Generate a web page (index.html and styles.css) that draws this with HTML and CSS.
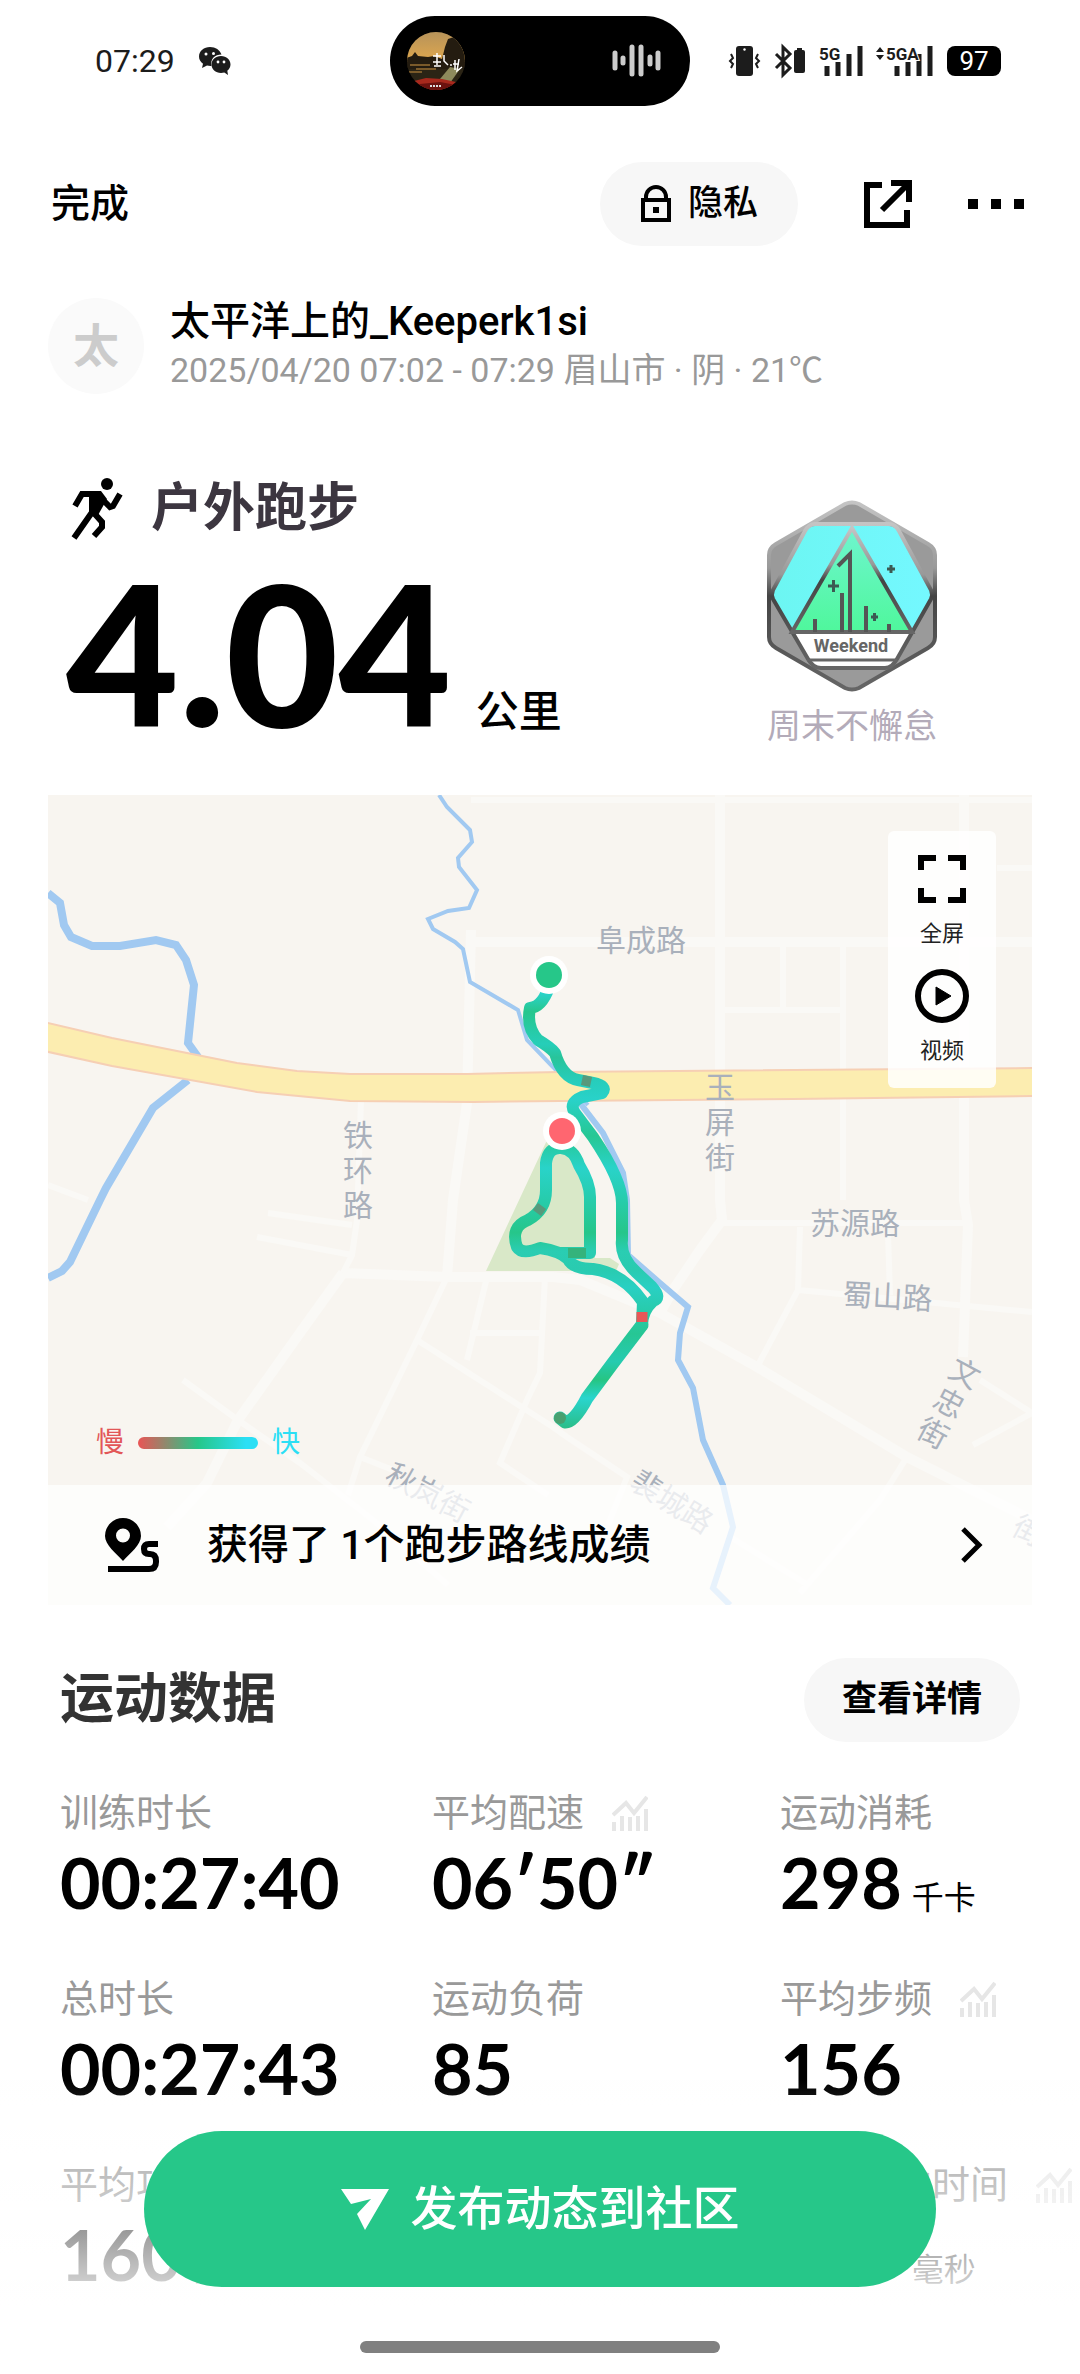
FILE: index.html
```html
<!DOCTYPE html>
<html lang="zh-CN">
<head>
    <meta charset="UTF-8">
    <meta name="viewport" content="width=device-width, initial-scale=1.0">
    <title>户外跑步</title>
    <link rel="stylesheet" href="styles.css">
</head>
<body>
    <!-- Status bar -->
    <div class="status-bar">
        <div class="status-left">
            <span class="clock">07:29</span>
            <svg width="32" height="28" viewBox="0 0 32 28">
                <path d="M11 0C5 0 0 4 0 9.500c0 3 1.500 5.500 4 7.200L3 21l5-2.500c1.500.4 3 .5 4.500.4C11 12 16 7.500 22.500 7.500 21 3 16.500 0 11 0z" fill="#1c1c1c"/>
                <path d="M22 9c-5.500 0-9.500 3.700-9.500 8.500S16.500 26 22 26c1.200 0 2.300-.2 3.300-.5L29 28l-.7-4.200c2-1.600 3.200-3.800 3.200-6.300C31.500 12.700 27.500 9 22 9z" fill="#1c1c1c"/>
                <circle cx="7" cy="7" r="1.500" fill="#fff"/><circle cx="14.500" cy="6.500" r="1.500" fill="#fff"/>
                <circle cx="19" cy="15" r="1.400" fill="#fff"/><circle cx="25" cy="15" r="1.400" fill="#fff"/>
            </svg>
        </div>
        <div class="island">
            <svg width="60" height="60" viewBox="0 0 60 60">
                <defs>
                    <clipPath id="cover"><circle cx="30" cy="30" r="29"/></clipPath>
                    <linearGradient id="sky" x1="0" y1="0" x2="0" y2="1">
                        <stop offset="0" stop-color="#b5925a"/><stop offset="1" stop-color="#e0a84e"/>
                    </linearGradient>
                </defs>
                <g clip-path="url(#cover)">
                    <rect width="60" height="60" fill="#2b2415"/>
                    <rect width="60" height="31" fill="url(#sky)"/>
                    <path d="M0 27l6-2 3-4 3 4 10 1 6-1 8 3 3-12 3-8 6-2 8 4 7 3v25H0z" fill="#241c10"/>
                    <path d="M4 34h20M10 38h20M2 41h14" stroke="#7a5a2a" stroke-width="2"/>
                    <path d="M34 48l10-12 10 2-10 14z" fill="#8d8a5c"/>
                    <path d="M0 52l20-5 16 1 14 3 10 3v6H0z" fill="#a8291d"/>
                    <path d="M4 54l30-3 26 5v4H0z" fill="#6b120f"/>
                    <path d="M27 25h8M31 22v12M27 31h8M28 35h7M38 24v6l4 4M44 34h2M49 29v10M47 33h6M53 28l-2 12 5-4" stroke="#fff" stroke-width="1.500" fill="none"/>
                    <path d="M24 55h12" stroke="#ddd" stroke-width="2" stroke-dasharray="2 1"/>
                </g>
            </svg>
            <svg width="50" height="34" viewBox="0 0 50 34" stroke="#ccc" stroke-width="5" stroke-linecap="round">
                <path d="M3 9v15M11 14v5M20 3v27M29 3v27M38 13v7M46 9v15"/>
            </svg>
        </div>
        <div class="status-right">
            <svg width="32" height="32" viewBox="0 0 32 32">
                <rect x="7" y="1" width="17" height="30" rx="3" fill="#1c1c1c"/><circle cx="15.500" cy="4.500" r="1.200" fill="#fff"/>
                <path d="M2 9l2 4-3 3 3 3-2 4M29 9l-2 4 3 3-3 3 2 4" stroke="#1c1c1c" stroke-width="2" fill="none"/>
            </svg>
            <svg width="32" height="32" viewBox="0 0 32 32">
                <path d="M2 9l14 14-7 7V2l7 7L2 23" stroke="#1c1c1c" stroke-width="3" fill="none"/>
                <rect x="20" y="5" width="11" height="23" rx="2" fill="#1c1c1c"/><rect x="23" y="3" width="5" height="4" fill="#1c1c1c"/>
            </svg>
            <svg width="44" height="32" viewBox="0 0 44 32">
                <path d="M8 21v10M19 17v14M30 9v22M41 1v30" stroke="#1c1c1c" stroke-width="5"/>
                <text x="0" y="15" class="signal">5G</text>
            </svg>
            <svg width="58" height="32" viewBox="0 0 58 32">
                <path d="M21 21v10M32 17v14M43 9v22M54 1v30" stroke="#1c1c1c" stroke-width="5"/>
                <path d="M0 7l4-5 4 5zM0 10l4 5 4-5z" fill="#1c1c1c"/>
                <text x="10" y="15" class="signal">5GA</text>
            </svg>
            <span class="battery">97</span>
        </div>
    </div>

    <div class="container">
        <div class="nav">
            <a href="#" class="done">完成</a>
            <button class="pill">
                <svg width="32" height="38" viewBox="0 0 32 38" fill="none" stroke="#000" stroke-width="4">
                    <rect x="3" y="15" width="26" height="20"/><path d="M6 15v-3a10 10 0 0 1 20 0v3"/><path d="M13 25h6" stroke-width="6"/>
                </svg>
                隐私
            </button>
            <button class="icon-button share" aria-label="分享">
                <svg width="50" height="50" viewBox="0 0 50 50" fill="none" stroke="#000" stroke-width="6">
                    <path d="M18 6H3v40h40V31"/><path d="M27 4h18v19"/><path d="M45 4L18 31"/>
                </svg>
            </button>
            <button class="icon-button" aria-label="更多">
                <svg width="56" height="10" viewBox="0 0 56 10"><path d="M0 0h10v10H0zM23 0h10v10H23zM46 0h10v10H46z"/></svg>
            </button>
        </div>

        <div class="user">
            <div class="avatar">太</div>
            <div>
                <div class="username">太平洋上的_Keeperk1si</div>
                <div class="meta">2025/04/20 07:02 - 07:29 眉山市 · 阴 · 21℃</div>
            </div>
        </div>

        <div class="summary">
            <div>
                <div class="sport">
                    <svg width="54" height="62" viewBox="0 0 54 62">
                        <circle cx="36" cy="6" r="6"/>
                        <path d="M4 28l7-12h17M24 30L3 60" fill="none" stroke="#000" stroke-width="6"/>
                        <path d="M18 13h12l6 8-10 18-8-2z"/>
                        <path d="M27 17l12 12 3-1 7-12M22 34l9 10v5l-8 9" fill="none" stroke="#000" stroke-width="6"/>
                    </svg>
                    <h1>户外跑步</h1>
                </div>
                <div class="distance">4.04<span>公里</span></div>
            </div>
            <div class="badge">
                <svg width="170" height="192" viewBox="0 0 170 192">
                    <defs>
                        <linearGradient id="metal" x1="0" y1="0" x2="0" y2="1">
                            <stop offset="0" stop-color="#c4c4c4"/><stop offset=".35" stop-color="#999"/><stop offset=".5" stop-color="#444"/><stop offset="1" stop-color="#666"/>
                        </linearGradient>
                        <linearGradient id="peak" x1="0" y1="0" x2="0" y2="1">
                            <stop offset="0" stop-color="#6ff5cf"/><stop offset="1" stop-color="#4ff79c"/>
                        </linearGradient>
                        <linearGradient id="glass" x1="0" y1="0" x2="1" y2="0">
                            <stop offset="0" stop-color="#6cf6f2"/><stop offset="1" stop-color="#74f8ff"/>
                        </linearGradient>
                    </defs>
                    <path d="M78 4q7-3 14 0l69 40q7 4 7 11v82q0 7-7 11l-69 40q-7 3-14 0L9 148q-7-4-7-11V55q0-7 7-11z" fill="#9a9a9a" stroke="url(#metal)" stroke-width="4"/>
                    <path d="M48 26h74q6 0 10 7l32 59q2 5 0 9l-34 58q-5 9-12 9H54q-8 0-13-9L6 101q-2-4 0-9l32-59q4-7 10-7z" fill="url(#glass)"/>
                    <path d="M25 132h120l-17 32q-4 5-10 5H54q-8 0-13-8z" fill="#fff"/>
                    <path d="M85 28l60 104H25z" fill="url(#peak)"/>
                    <path d="M48 24h74q6 0 10 7l32 59q2 5 0 9l-34 60q-5 9-12 9H54q-8 0-13-9L6 99q-2-4 0-9l32-59q4-7 10-7z" fill="none" stroke="url(#metal)" stroke-width="4"/>
                    <path d="M25 132L85 28l60 104z" fill="none" stroke="url(#metal)" stroke-width="4"/>
                    <path d="M40 160h90" stroke="#666" stroke-width="3"/>
                    <path d="M71 66l12-12v78M75 93v39M99 106v26M48 119v13M122 124v8" stroke="#555" stroke-width="4" fill="none"/>
                    <path d="M61 86h11M66.500 80v12M120 69h8M124 65v8M104 117h7M107.500 113v8" stroke="#3c5a52" stroke-width="3"/>
                    <text x="84" y="152" text-anchor="middle" class="badge-text">Weekend</text>
                </svg>
                <div class="badge-name">周末不懈怠</div>
            </div>
        </div>

        <div class="map">
            <svg class="map-canvas" viewBox="0 0 984 810">
                <defs>
                    <linearGradient id="pace" gradientUnits="userSpaceOnUse" x1="0" y1="180" x2="0" y2="640">
                        <stop offset="0" stop-color="#2ad9e0"/>
                        <stop offset=".03" stop-color="#2ad6d8"/>
                        <stop offset=".08" stop-color="#27c68d"/>
                        <stop offset=".15" stop-color="#26ceb9"/>
                        <stop offset=".18" stop-color="#28c49a"/>
                        <stop offset=".23" stop-color="#27cdbb"/>
                        <stop offset=".27" stop-color="#29d2c9"/>
                        <stop offset=".35" stop-color="#26c793"/>
                        <stop offset=".42" stop-color="#29d3c9"/>
                        <stop offset=".48" stop-color="#27cdb0"/>
                        <stop offset=".56" stop-color="#26c68a"/>
                        <stop offset=".6" stop-color="#2acdb2"/>
                        <stop offset=".64" stop-color="#29cbb0"/>
                        <stop offset=".68" stop-color="#29d0c3"/>
                        <stop offset=".78" stop-color="#27c694"/>
                        <stop offset=".84" stop-color="#26cbb0"/>
                        <stop offset=".88" stop-color="#26c583"/>
                        <stop offset=".92" stop-color="#29d5ce"/>
                        <stop offset="1" stop-color="#2bb878"/>
                    </linearGradient>
                </defs>
                <!-- minor roads -->
                <g fill="none" stroke="#faf9f6">
                    <path stroke-width="10" d="M672 0V405L674 425L652 455L625 495L612 518M916 0V405L920 430L915 562M295 478L399 482H505L532 485L612 518L709 572L859 662L984 725M423 135L419 308L405 405L399 482M423 147H984M295 478L259 528L190 625L159 688L119 732"/>
                    <path stroke-width="6" d="M423 5H984M735 148V215M795 148V405M675 215H795M949 73H984M313 305L309 425L304 460L295 478M399 482L369 545L312 662L300 700M135 585L190 625L252 668L325 725L400 790M369 545L505 632L519 642L579 682L560 730M422 538H495M439 482L419 565M497 482L492 578L479 605L452 668L500 700M675 428H920M752 432L750 495L709 572M750 495L984 517M840 438L842 500M859 662L832 705L752 798M932 585L984 618L925 650M209 442L304 460M220 418L304 430M312 662L345 675M0 390L40 405M679 740L760 790"/>
                </g>
                <!-- park -->
                <path d="M500 343L438 476H568L571 469L562 463H547L545 395L525 350z" fill="#d9e8c8"/>
                <!-- rivers -->
                <g fill="none" stroke="#a1c9f1">
                    <path stroke-width="8" d="M0 98L12 108L16 130L23 142L44 151L72 151L108 145L128 150L138 165L146 190L140 248L150 262M140 285L105 313L58 393L52 405L22 467L14 476L0 483"/>
                    <path stroke-width="4" d="M391 0L399 12L422 35L424 47L410 63L411 72L429 95L421 113L400 116L380 124L385 134L407 147L415 154L422 187L470 215L479 245L505 272L540 310"/>
                    <path stroke-width="6" d="M532 308L555 338L575 378L579 405L580 460L612 488L640 512L632 538L630 565L645 593L655 645L675 690L685 732L665 793L682 810"/>
                </g>
                <!-- main road -->
                <path d="M-4 227L64 243L189 268L249 276L302 279H419L512 277L988 273V301L745 304L512 306L425 307L302 306L209 297L64 271L-4 256z" fill="#fcedb0" stroke="#f6cfb4" stroke-width="2"/>
                <g class="road-name">
                    <text x="548" y="156">阜成路</text>
                    <text x="762" y="439">苏源路</text>
                    <text x="794" y="510" transform="rotate(3 794 510)">蜀山路</text>
                    <text text-anchor="middle"><tspan x="310" y="351">铁</tspan><tspan x="310" y="386">环</tspan><tspan x="310" y="421">路</tspan></text>
                    <text text-anchor="middle"><tspan x="672" y="303">玉</tspan><tspan x="672" y="338">屏</tspan><tspan x="672" y="373">街</tspan></text>
                    <text transform="translate(917 578) rotate(28)" text-anchor="middle"><tspan x="0" y="11">文</tspan><tspan x="0" y="45">忠</tspan><tspan x="0" y="79">街</tspan></text>
                    <text transform="translate(335 686) rotate(28)">秋岚街</text>
                    <text transform="translate(580 692) rotate(32)">裴城路</text>
                    <text transform="translate(962 738) rotate(28)">街</text>
                </g>
                <!-- track -->
                <g fill="none" stroke="url(#pace)" stroke-width="12" stroke-linecap="round" stroke-linejoin="round">
                    <path d="M501 192Q494 212 482 213Q478 232 490 245Q502 252 507 258Q514 282 530 285L545 288Q560 291 554 298L534 302Q520 308 527 318L545 342Q574 385 574 408V445Q572 462 588 477L604 492Q614 503 605 506Q594 516 594 530"/>
                    <path d="M594 530L595 507Q575 478 545 474Q525 474 520 464Q512 456 492 453Q474 460 469 452Q462 432 480 425Q498 415 498 395V368Q500 352 513 353Q526 354 531 370Q542 388 542 402V458L512 458"/>
                    <path stroke-width="13" d="M594 530L565 568L539 603Q526 628 517 627L512 623"/>
                </g>
                <path d="M594 517V527" stroke="#e75757" stroke-width="11"/>
                <path d="M494 411L489 418M534 285L543 287" stroke="#58997b" stroke-width="10"/>
                <path d="M520 458H538" stroke="#35b37c" stroke-width="10"/>
                <circle cx="512" cy="623" r="6" fill="#48a070"/>
                <circle cx="501" cy="180" r="19" fill="#fff"/><circle cx="501" cy="180" r="13" fill="#26c789"/>
                <circle cx="514" cy="336" r="19" fill="#fff"/><circle cx="514" cy="336" r="13" fill="#ff6670"/>
            </svg>
            <div class="map-tools">
                <button>
                    <svg width="54" height="54" viewBox="0 0 54 54" fill="none" stroke="#000" stroke-width="6">
                        <path d="M21 6H6v12M33 6h15v12M21 48H6V36M33 48h15V36"/>
                    </svg>
                    全屏
                </button>
                <button>
                    <svg width="54" height="54" viewBox="0 0 54 54">
                        <circle cx="27" cy="27" r="24" fill="none" stroke="#000" stroke-width="6"/><path d="M21 18l15 9-15 9z" stroke="#000" stroke-linejoin="round"/>
                    </svg>
                    视频
                </button>
            </div>
            <div class="legend">
                <span class="slow">慢</span>
                <span class="legend-bar"></span>
                <span class="fast">快</span>
            </div>
            <a href="#" class="route-link">
                <svg width="56" height="56" viewBox="0 0 56 56">
                    <path fill-rule="evenodd" d="M19 1A18 18 0 0 0 1 19C1 28 12 36 19 44C26 36 37 28 37 19A18 18 0 0 0 19 1zM19 11.500a7 7 0 1 1 0 14 7 7 0 0 1 0-14z"/>
                    <path d="M54 27H45q-5 0-5 5t5 5h1q6 0 6 7v1q0 7-7 7H4" fill="none" stroke="#000" stroke-width="6"/>
                </svg>
                <span>获得了 1个跑步路线成绩</span>
                <svg width="24" height="36" viewBox="0 0 24 36"><path d="M3 2l16 16L3 34" fill="none" stroke="#000" stroke-width="5"/></svg>
            </a>
        </div>

        <div class="section-head">
            <h2>运动数据</h2>
            <button class="pill detail">查看详情</button>
        </div>

        <svg class="symbols">
            <symbol id="chart" viewBox="0 0 36 36">
                <path d="M1 20L14 8l8 10L35 2" fill="none" stroke="#e6e6e6" stroke-width="4"/>
                <path d="M2 27v9M10 21v15M18 22v14M26 21v15M34 14v22" stroke="#e6e6e6" stroke-width="4"/>
            </symbol>
        </svg>
        <div class="stats">
            <div class="stat">
                <div class="stat-label">训练时长</div>
                <div class="stat-value">00:27:40</div>
            </div>
            <div class="stat">
                <div class="stat-label">平均配速 <svg class="chart"><use href="#chart"/></svg></div>
                <div class="stat-value">06′50″</div>
            </div>
            <div class="stat">
                <div class="stat-label">运动消耗</div>
                <div class="stat-value">298<span>千卡</span></div>
            </div>
            <div class="stat">
                <div class="stat-label">总时长</div>
                <div class="stat-value">00:27:43</div>
            </div>
            <div class="stat">
                <div class="stat-label">运动负荷</div>
                <div class="stat-value">85</div>
            </div>
            <div class="stat">
                <div class="stat-label">平均步频 <svg class="chart"><use href="#chart"/></svg></div>
                <div class="stat-value">156</div>
            </div>
            <div class="stat">
                <div class="stat-label">平均功率</div>
                <div class="stat-value">160<span>瓦</span></div>
            </div>
            <div class="stat"></div>
            <div class="stat">
                <div class="stat-label">平均触地时间 <svg class="chart"><use href="#chart"/></svg></div>
                <div class="stat-value">250<span>毫秒</span></div>
            </div>
        </div>
    </div>

    <div class="bottom">
        <button class="publish">
            <svg width="48" height="42" viewBox="0 0 48 42"><path d="M0 1h48L24 42l-8-16 14-15L10 16z" fill="#fff"/></svg>
            发布动态到社区
        </button>
        <div class="home-bar"></div>
    </div>
</body>
</html>
```

FILE: styles.css
```css
* {
    box-sizing: border-box;
}
body {
    margin: 0;
    min-height: 100vh;
    overflow: hidden;
    background-color: #fff;
    color: #000;
    font-family: Roboto, "Noto Sans CJK SC", sans-serif;
}
button {
    border: none;
    padding: 0;
    background: none;
    color: #000;
    font-family: inherit;
    cursor: pointer;
}
a {
    color: #000;
    text-decoration: none;
}
svg {
    display: block;
    flex-shrink: 0;
}

/* Status bar */
.status-bar {
    display: grid;
    grid-template-columns: 1fr 300px 1fr;
    align-items: center;
    padding-top: 16px;
}
.status-left {
    display: flex;
    align-items: center;
    gap: 24px;
    padding-left: 95px;
}
.clock {
    font-size: 32px;
    color: #1c1c1c;
}
.island {
    display: flex;
    align-items: center;
    justify-content: space-between;
    height: 90px;
    padding: 0 28px 0 16px;
    border-radius: 45px;
    background-color: #000;
}
.status-right {
    display: flex;
    align-items: center;
    justify-content: flex-end;
    gap: 13px;
    padding-right: 79px;
}
.status-right svg {
    overflow: visible;
}
.signal {
    font: bold 17px Roboto, sans-serif;
    fill: #1c1c1c;
    stroke: #fff;
    stroke-width: 2px;
    paint-order: stroke;
}
.battery {
    width: 54px;
    border-radius: 8px;
    background-color: #000;
    color: #fff;
    font-size: 26px;
    line-height: 30px;
    text-align: center;
}

.container {
    padding: 56px 48px 0;
}
.nav {
    display: flex;
    align-items: center;
}
.done {
    margin-right: auto;
    padding-left: 3px;
    font-size: 39px;
    font-weight: 500;
    line-height: 48px;
}
.pill {
    display: flex;
    align-items: center;
    justify-content: center;
    gap: 16px;
    height: 84px;
    padding: 0 40px;
    border-radius: 42px;
    background-color: #f7f7f7;
    font-size: 35px;
    font-weight: 500;
    line-height: 40px;
}
.icon-button {
    margin-right: 8px;
}
.share {
    margin: 0 54px 0 66px;
}

/* User */
.user {
    display: flex;
    align-items: center;
    gap: 26px;
    margin-top: 52px;
}
.avatar {
    width: 96px;
    border-radius: 50%;
    background-color: #fafafa;
    color: #ccc;
    font-size: 46px;
    font-weight: bold;
    line-height: 96px;
    text-align: center;
}
.username {
    font-size: 40px;
    font-weight: 500;
    line-height: 48px;
}
.meta {
    font-size: 34px;
    line-height: 48px;
    color: #999;
}

/* Summary */
.summary {
    display: flex;
    justify-content: space-between;
    align-items: flex-start;
    margin-top: 84px;
    padding: 0 90px 0 18px;
}
.sport {
    display: flex;
    align-items: center;
    gap: 26px;
    height: 62px;
    padding-left: 5px;
}
.sport h1 {
    margin: 0;
    font-size: 52px;
    line-height: 56px;
    color: #3c3640;
}
.distance {
    display: flex;
    align-items: baseline;
    gap: 24px;
    margin-top: 15px;
    font-family: Lato, sans-serif;
    font-size: 195px;
    font-weight: 900;
    line-height: 195px;
    white-space: nowrap;
}
.distance span {
    font-family: "Noto Sans CJK SC", sans-serif;
    font-size: 43px;
    font-weight: 500;
    line-height: 1;
}
.badge {
    display: flex;
    flex-direction: column;
    align-items: center;
    width: 180px;
    padding-top: 22px;
}
.badge-text {
    font: bold 18px Roboto, sans-serif;
    fill: #666;
}
.badge-name {
    margin-top: 10px;
    font-size: 34px;
    line-height: 48px;
    color: #b3abb9;
}

/* Map */
.map {
    position: relative;
    margin-top: 45px;
    overflow: hidden;
    background-color: #f8f5f0;
}
.map-canvas {
    width: 100%;
    height: auto;
}
.road-name {
    font-size: 30px;
    fill: #a9b0bb;
}
.map-tools {
    position: absolute;
    top: 36px;
    right: 36px;
    display: flex;
    flex-direction: column;
    gap: 19px;
    width: 108px;
    padding: 21px 0;
    border-radius: 6px;
    background-color: rgba(255, 255, 255, 0.85);
}
.map-tools button {
    display: flex;
    flex-direction: column;
    align-items: center;
    gap: 12px;
    color: #222;
    font-size: 22px;
    line-height: 32px;
}
.legend {
    position: absolute;
    left: 48px;
    bottom: 144px;
    display: flex;
    align-items: center;
    gap: 14px;
    font-size: 28px;
    line-height: 36px;
}
.slow {
    color: #e25757;
}
.fast {
    color: #2bdff5;
}
.legend-bar {
    width: 120px;
    height: 12px;
    border-radius: 6px;
    background: linear-gradient(to right, #ea5455, #26c789 50%, #2bdff5 90%);
}
.route-link {
    position: absolute;
    left: 0;
    right: 0;
    bottom: 0;
    display: flex;
    align-items: center;
    height: 120px;
    padding: 0 48px 0 56px;
    background-color: rgba(255, 255, 255, 0.75);
    font-size: 41px;
    font-weight: 500;
    line-height: 48px;
}
.route-link span {
    flex: 1;
    margin-left: 47px;
}

/* Stats */
.section-head {
    display: flex;
    justify-content: space-between;
    align-items: center;
    margin-top: 53px;
    padding: 0 12px;
}
.section-head h2 {
    margin: 0;
    font-size: 54px;
    line-height: 56px;
    color: #333;
}
.detail {
    padding: 0 38px;
    font-weight: bold;
}
.symbols {
    position: absolute;
    width: 0;
    height: 0;
}
.stats {
    display: grid;
    grid-template-columns: 372fr 348fr 252fr;
    row-gap: 58px;
    margin-top: 47px;
    padding-left: 12px;
}
.stat {
    min-width: 0;
    white-space: nowrap;
}
.stat-label {
    display: flex;
    align-items: center;
    gap: 28px;
    font-size: 38px;
    line-height: 48px;
    color: #999;
}
.chart {
    width: 36px;
    height: 36px;
}
.stat-value {
    margin-top: 10px;
    font-family: Lato, sans-serif;
    font-size: 70px;
    font-weight: bold;
    line-height: 70px;
}
.stat-value span {
    margin-left: 10px;
    font-family: "Noto Sans CJK SC", sans-serif;
    font-size: 32px;
    font-weight: 400;
    line-height: 1;
}

/* Bottom */
.bottom {
    position: fixed;
    left: 0;
    right: 0;
    bottom: 0;
    display: flex;
    flex-direction: column;
    align-items: center;
    padding: 51px 144px 21px;
    background: linear-gradient(rgba(255, 255, 255, 0), #fff 250px);
}
.publish {
    display: flex;
    align-items: center;
    justify-content: center;
    gap: 22px;
    width: 100%;
    height: 156px;
    border-radius: 78px;
    background-color: #26c789;
    color: #fff;
    font-size: 47px;
    font-weight: 500;
    line-height: 48px;
}
.home-bar {
    width: 360px;
    height: 12px;
    margin-top: 54px;
    border-radius: 6px;
    background-color: #808080;
}
```
